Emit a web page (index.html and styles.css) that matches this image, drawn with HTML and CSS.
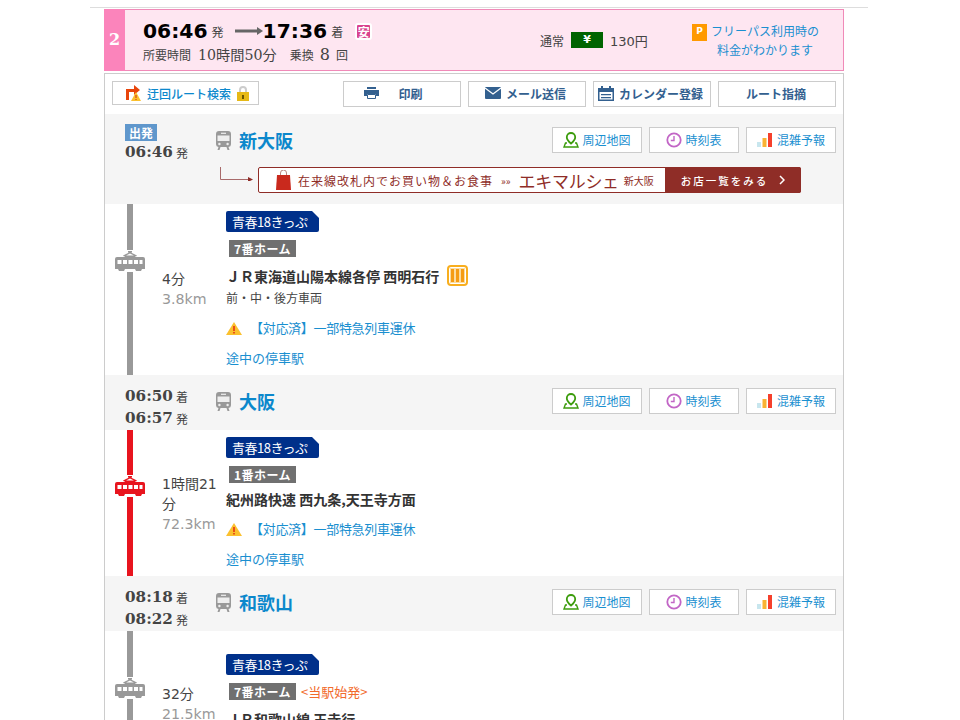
FILE: index.html
```html
<!DOCTYPE html>
<html lang="ja">
<head>
<meta charset="utf-8">
<title>ルート検索結果</title>
<link rel="stylesheet" href="styles.css">
</head>
<body>
<svg class="defs" width="0" height="0" aria-hidden="true">
  <symbol id="i-station" viewBox="0 0 15 19">
    <path d="M3 0h9a3 3 0 0 1 3 3v10a3 3 0 0 1-2.500 3H2.500A3 3 0 0 1 0 13V3a3 3 0 0 1 3-3z" fill="#999"/>
    <path d="M1.500 4.500h12v5.500h-12z" fill="#eee"/>
    <path d="M5 1.700h5v1.200H5z" fill="#eee"/>
    <circle cx="3.400" cy="13" r="1.200" fill="#eee"/>
    <circle cx="11.600" cy="13" r="1.200" fill="#eee"/>
    <path d="M2.500 16h2l-1 3h-2zM10.500 16h2l1 3h-2z" fill="#999"/>
  </symbol>
  <symbol id="i-train" viewBox="0 0 30 22">
    <path d="M13 1h4v1.500h-4zM15 2l7 3.500-1 1-6-3-6 3-1-1zM10 5.500h10v1.500H10z" fill="currentColor"/>
    <path d="M2 7h26a2 2 0 0 1 2 2v10H27l-1 2h-5l-1-2H10l-1 2H4l-1-2H0V9a2 2 0 0 1 2-2zM2.500 10v4h4v-4zM8 10v4h4v-4zM13.500 10v4h4v-4zM19 10v4h4v-4zM24.500 10v4h3v-4z" fill="currentColor" fill-rule="evenodd"/>
  </symbol>
  <symbol id="i-pin" viewBox="0 0 16 16">
    <path d="M8 1a4.200 4.200 0 0 1 4.200 4.200C12.200 8 8 11.500 8 11.500S3.800 8 3.800 5.200A4.200 4.200 0 0 1 8 1z" fill="none" stroke="#3c9c0c" stroke-width="1.800"/>
    <path d="M4 11H2.500L1 15h14l-1.500-4H12" fill="none" stroke="#3c9c0c" stroke-width="1.400"/>
  </symbol>
  <symbol id="i-clock" viewBox="0 0 16 16">
    <circle cx="8" cy="8" r="6.700" fill="none" stroke="#c266c6" stroke-width="1.800"/>
    <path d="M8 4v4.500H4.800" fill="none" stroke="#c266c6" stroke-width="1.400"/>
  </symbol>
  <symbol id="i-bars" viewBox="0 0 15 14">
    <rect x="0" y="9" width="4" height="5" fill="#c8e6ee"/>
    <rect x="5.500" y="5" width="4" height="9" fill="#f9b233"/>
    <rect x="11" y="0" width="4" height="14" fill="#f5402c"/>
  </symbol>
  <symbol id="i-warn" viewBox="0 0 16 13">
    <path d="M8 0l8 13H0z" fill="#fbc02d"/>
    <path d="M7.200 4h1.600v5H7.200zM7.200 10h1.600v1.500H7.200z" fill="#e53312"/>
  </symbol>
</svg>

<div class="page">
  <div class="summary">
    <div class="summary-no">2</div>
    <div class="summary-times">
      <div class="summary-line">
        <span class="big-time">06:46</span><span class="unit">発</span>
        <svg class="long-arrow" width="28" height="8" viewBox="0 0 28 8"><path d="M0 2.500h22V0l6 4-6 4V5.500H0z" fill="#666"/></svg>
        <span class="big-time">17:36</span><span class="unit">着</span>
        <span class="cheap">安</span>
      </div>
      <div class="summary-meta">
        <span>所要時間</span><span class="meta-val">10時間50分</span>
        <span class="meta-gap">乗換</span><span class="meta-num">8</span><span>回</span>
      </div>
    </div>
    <div class="fare">
      <span>通常</span><span class="yen">¥</span><span class="fare-val">130円</span>
    </div>
    <div class="freepass">
      <span class="p-icon">P</span>
      <a class="link">フリーパス利用時の<br>料金がわかります</a>
    </div>
  </div>

  <div class="result">
    <div class="toolbar">
      <a class="detour">
        <svg width="15" height="16" viewBox="0 0 15 16"><path d="M0 15V4h8V0l6 5-6 5V7H3v8z" fill="#e8450c"/><path d="M10 7l5 9H5z" fill="#fbc02d"/><path d="M9.500 10h1v3h-1zM9.500 14h1v1h-1z" fill="#c9291d"/></svg>
        <span>迂回ルート検索</span>
        <svg width="12" height="15" viewBox="0 0 12 15"><path d="M3 7V4a3 3 0 0 1 6 0v3" fill="none" stroke="#ccc" stroke-width="2"/><rect y="6" width="12" height="9" fill="#e6b917"/><rect x="5" y="9" width="2" height="4" fill="#6b5600"/></svg>
      </a>
      <div class="tool-right">
        <a class="tool tool-print">
          <svg width="15" height="12" viewBox="0 0 15 12"><path d="M3 0h9v2H3zM0 3h15v6h-3V7H3v2H0z" fill="#33608f"/><path d="M3.500 7.500h8v4h-8z" fill="none" stroke="#33608f"/></svg>
          <span>印刷</span>
        </a>
        <a class="tool">
          <svg width="16" height="12" viewBox="0 0 16 12"><rect width="16" height="12" rx="1" fill="#33608f"/><path d="M0 1l8 6 8-6" fill="none" stroke="#fff" stroke-width="1.300"/></svg>
          <span>メール送信</span>
        </a>
        <a class="tool">
          <svg width="16" height="15" viewBox="0 0 16 15"><path d="M0 2h3V0h2v2h6V0h2v2h3v13H0zM1.500 6v7.500h13V6z" fill="#33608f" fill-rule="evenodd"/><path d="M3 8h10v1.300H3zM3 11h10v1.300H3z" fill="#33608f"/></svg>
          <span>カレンダー登録</span>
        </a>
        <a class="tool"><span>ルート指摘</span></a>
      </div>
    </div>

    <section class="station station-first">
      <div class="station-head">
        <div class="station-time">
          <span class="depart-tag">出発</span>
          <div class="time-row"><span class="time">06:46</span><span class="unit">発</span></div>
        </div>
        <svg class="station-icon"><use href="#i-station"/></svg>
        <a class="station-name">新大阪</a>
        <div class="station-btns">
          <a class="sbtn"><svg class="si-16"><use href="#i-pin"/></svg>周辺地図</a>
          <a class="sbtn"><svg class="si-16"><use href="#i-clock"/></svg>時刻表</a>
          <a class="sbtn"><svg class="si-15"><use href="#i-bars"/></svg>混雑予報</a>
        </div>
      </div>
      <div class="banner-row">
        <svg class="banner-arrow" width="33" height="14" viewBox="0 0 33 14"><path d="M.500 0v12.500H28" fill="none" stroke="#a86a6a"/><path d="M28 10l5 2.500-5 2.500z" fill="#8f2d27"/></svg>
        <div class="banner">
          <div class="banner-left">
            <svg width="15" height="20" viewBox="0 0 15 20"><path d="M4.500 5V3a3 3 0 0 1 6 0v2" fill="none" stroke="#b9867f"/><path d="M1 5h13l1 15H0z" fill="#c9291d"/></svg>
            <span class="banner-text">在来線改札内でお買い物＆お食事</span>
            <span class="banner-chev">»»</span>
            <span class="banner-logo">エキマルシェ</span>
            <span class="banner-place">新大阪</span>
          </div>
          <div class="banner-cta">
            <span>お店一覧をみる</span>
            <svg width="6" height="10" viewBox="0 0 6 10"><path d="M1 1l4 4-4 4" fill="none" stroke="#fff" stroke-width="1.500"/></svg>
          </div>
        </div>
      </div>
    </section>

    <section class="segment seg-a">
      <div class="rail rail-gray"><svg class="train train-gray"><use href="#i-train"/></svg></div>
      <div class="seg-time"><div>4分</div><div class="dist">3.8km</div></div>
      <div class="seg-body">
        <span class="ticket">青春18きっぷ</span>
        <div class="home-row"><span class="home">7番ホーム</span></div>
        <div class="line-name">ＪＲ東海道山陽本線各停 西明石行
          <svg class="car-icon" width="21" height="21" viewBox="0 0 21 21"><rect x="1" y="1" width="19" height="19" rx="3" fill="#fff" stroke="#f8ae1e" stroke-width="2"/><path d="M3 3h15v15H3z" fill="#fcdca0"/><path d="M4 4h3v13H4zM9 4h3v13H9zM14 4h3v13h-3z" fill="#f59c12"/></svg>
        </div>
        <div class="cars">前・中・後方車両</div>
        <a class="alert"><svg class="warn"><use href="#i-warn"/></svg>【対応済】一部特急列車運休</a>
        <a class="stops">途中の停車駅</a>
      </div>
    </section>

    <section class="station">
      <div class="station-head">
        <div class="station-time">
          <div class="time-row"><span class="time">06:50</span><span class="unit">着</span></div>
          <div class="time-row"><span class="time">06:57</span><span class="unit">発</span></div>
        </div>
        <svg class="station-icon"><use href="#i-station"/></svg>
        <a class="station-name">大阪</a>
        <div class="station-btns">
          <a class="sbtn"><svg class="si-16"><use href="#i-pin"/></svg>周辺地図</a>
          <a class="sbtn"><svg class="si-16"><use href="#i-clock"/></svg>時刻表</a>
          <a class="sbtn"><svg class="si-15"><use href="#i-bars"/></svg>混雑予報</a>
        </div>
      </div>
    </section>

    <section class="segment seg-b">
      <div class="rail rail-red"><svg class="train train-red"><use href="#i-train"/></svg></div>
      <div class="seg-time"><div>1時間21分</div><div class="dist">72.3km</div></div>
      <div class="seg-body">
        <span class="ticket">青春18きっぷ</span>
        <div class="home-row"><span class="home">1番ホーム</span></div>
        <div class="line-name line-compact">紀州路快速 西九条,天王寺方面</div>
        <a class="alert alert-tight"><svg class="warn"><use href="#i-warn"/></svg>【対応済】一部特急列車運休</a>
        <a class="stops">途中の停車駅</a>
      </div>
    </section>

    <section class="station">
      <div class="station-head">
        <div class="station-time">
          <div class="time-row"><span class="time">08:18</span><span class="unit">着</span></div>
          <div class="time-row"><span class="time">08:22</span><span class="unit">発</span></div>
        </div>
        <svg class="station-icon"><use href="#i-station"/></svg>
        <a class="station-name">和歌山</a>
        <div class="station-btns">
          <a class="sbtn"><svg class="si-16"><use href="#i-pin"/></svg>周辺地図</a>
          <a class="sbtn"><svg class="si-16"><use href="#i-clock"/></svg>時刻表</a>
          <a class="sbtn"><svg class="si-15"><use href="#i-bars"/></svg>混雑予報</a>
        </div>
      </div>
    </section>

    <section class="segment seg-c">
      <div class="rail rail-gray"><svg class="train train-gray"><use href="#i-train"/></svg></div>
      <div class="seg-time"><div>32分</div><div class="dist">21.5km</div></div>
      <div class="seg-body">
        <span class="ticket">青春18きっぷ</span>
        <div class="home-row"><span class="home">7番ホーム</span><span class="origin">&lt;当駅始発&gt;</span></div>
        <div class="line-name">ＪＲ和歌山線 王寺行</div>
      </div>
    </section>
  </div>
</div>
</body>
</html>
```

FILE: styles.css
```css
* { box-sizing: border-box; }
html, body { margin: 0; padding: 0; height: 720px; overflow: hidden; background: #fff; }
body { font-family: "Noto Sans CJK JP", "DejaVu Sans", sans-serif; font-size: 13px; color: #333; }
a { color: #0b88cc; text-decoration: none; }
.defs { position: absolute; }

.page { width: 778px; margin-left: 90px; padding: 9px 14px 0; background: linear-gradient(#ddd, #ddd) 0 7px / 100% 1px no-repeat; }

.summary { display: flex; width: 740px; height: 62px; border: 1px solid #f08ab8; background: #fee6f1; }
.summary-no { width: 21px; height: 62px; margin: -1px 0 -1px -1px; background: #fb84bb; color: #fff; font: bold 16px/62px "DejaVu Serif", serif; text-align: center; }
.summary-times { padding: 9px 0 0 18px; width: 415px; }
.summary-line { display: flex; align-items: center; height: 24px; color: #000; }
.big-time { font: bold 20.300px/24px "DejaVu Sans", sans-serif; color: #000; }
.summary-line .unit { font-size: 12px; margin-left: 4px; color: #444; }
.long-arrow { margin-left: 11px; }
.cheap { width: 17px; height: 17px; margin-left: 12px; background: #d9438f; color: #fff; font-size: 12px; font-weight: 700; line-height: 13px; text-align: center; border: 2px solid #fff; border-radius: 3px; display: block; }
.summary-meta { display: flex; align-items: baseline; margin-top: 2px; font-size: 12px; line-height: 20px; color: #444; }
.meta-val { font: 14.200px/20px "DejaVu Serif", "Noto Sans CJK JP", serif; margin-left: 7px; }
.meta-gap { margin-left: 13px; }
.meta-num { font: 16px/20px "DejaVu Serif", serif; margin: 0 6px; }
.fare { display: flex; align-items: center; width: 152px; height: 60px; font-size: 12px; color: #444; }
.yen { width: 32px; height: 16px; margin: 0 7px; background: #006400; color: #fff; font: bold 11px/16px "DejaVu Sans", sans-serif; text-align: center; }
.fare-val { font-family: "DejaVu Sans", "Noto Sans CJK JP", sans-serif; font-size: 13px; }
.freepass { display: flex; align-items: flex-start; padding-top: 11px; }
.p-icon { width: 15px; height: 17px; margin-top: 3px; margin-right: 4px; background: #f90; color: #fff; font: bold 9px/15px "DejaVu Sans", sans-serif; text-align: center; }
.freepass .link { font-size: 12px; line-height: 19px; text-align: center; color: #1a8fd0; }

.result { width: 740px; height: 660px; margin-top: 2px; border: 1px solid #ccc; border-bottom: 0; }
.toolbar { display: flex; justify-content: space-between; height: 40px; padding: 7px 7px 0; background: #fff; }
.detour { display: flex; align-items: center; gap: 6px; width: 147px; height: 24px; padding-left: 13px; border: 1px solid #ccc; font-size: 12px; font-weight: 500; }
.tool-right { display: flex; gap: 7px; }
.tool { display: flex; align-items: center; justify-content: center; gap: 5px; width: 118px; height: 26px; padding: 0 3px 2px 0; border: 1px solid #ccc; color: #33608f; font-size: 12px; font-weight: 700; }
.tool:last-child { padding-right: 2px; }
.tool-print { gap: 19px; padding-right: 17px; }

.station { background: #f5f5f5; height: 55px; }
.station-first { height: 90px; }
.station-head { display: flex; align-items: center; height: 52px; padding-right: 7px; }
.station-time { align-self: flex-start; width: 111px; padding: 10px 0 0 20px; }
.time-row { display: flex; align-items: center; height: 22px; }
.time { font: bold 15.200px/22px "DejaVu Serif", serif; color: #444; }
.station-time .unit { font-size: 12px; margin-left: 3px; color: #444; }
.depart-tag { display: block; width: 32px; height: 17px; background: #5f97cc; color: #fff; font-size: 12px; font-weight: 700; line-height: 17px; text-align: center; }
.station-icon { width: 15px; height: 19px; flex: none; }
.station-name { margin-left: 8px; font-size: 18px; font-weight: 700; color: #0b88cc; line-height: 26px; }
.station-btns { display: flex; gap: 7px; margin-left: auto; }
.sbtn { display: flex; align-items: center; justify-content: center; gap: 3px; width: 90px; height: 26px; padding-bottom: 2px; background: #fff; border: 1px solid #ccc; color: #1a8fd0; font-size: 12px; }
.si-16 { width: 16px; height: 16px; margin-top: 2px; }
.si-15 { width: 15px; height: 14px; margin: 2px 2px 0 0; }

.banner-row { display: flex; align-items: flex-start; margin-top: 1px; padding-left: 115px; }
.banner-arrow { margin-right: 5px; }
.banner { display: flex; width: 543px; height: 26px; border: 1px solid #8f2d27; border-radius: 2px; background: #fff; }
.banner-left { flex: 1; display: flex; align-items: center; padding-left: 17px; color: #8f2d27; font-size: 11px; white-space: nowrap; }
.banner-text { margin-left: 7px; font-size: 12px; letter-spacing: 1px; }
.banner-chev { margin-left: 8px; font-size: 10px; }
.banner-logo { margin-left: 8px; font-size: 17px; letter-spacing: -.3px; }
.banner-place { margin-left: 5px; font-size: 10px; }
.banner-cta { width: 136px; margin: -1px -1px -1px 0; background: #8f2d27; color: #fff; display: flex; align-items: center; justify-content: center; gap: 11px; font-size: 10.500px; font-weight: 500; letter-spacing: 2px; border-radius: 0 2px 2px 0; }

.segment { display: flex; background: #fff; }
.seg-a { height: 171px; }
.seg-b { height: 146px; }
.seg-c { height: 146px; }
.rail { width: 57px; position: relative; flex: none; }
.rail::before { content: ""; position: absolute; left: 22px; top: 0; bottom: 0; width: 6px; }
.rail-gray::before { background: #999; }
.rail-red::before { background: #e8141e; }
.train { position: absolute; left: 10px; top: 46px; width: 30px; height: 22px; background: #fff; }
.train-gray { color: #999; }
.train-red { color: #e8141e; top: 45px; }
.seg-time { width: 64px; padding-right: 5px; display: flex; flex-direction: column; justify-content: center; font: 14px/20px "DejaVu Sans", "Noto Sans CJK JP", sans-serif; color: #444; flex: none; }
.seg-a .seg-time { margin-top: -2px; }
.seg-b .seg-time { margin-top: 2px; }
.dist { color: #999; font-size: 14.200px; white-space: nowrap; }
.seg-body { padding-top: 7px; flex: 1; }
.seg-c .seg-body { padding-top: 23px; }
.ticket { display: block; width: 93px; height: 21px; background: #00308a; color: #fff; font-size: 13px; letter-spacing: -.5px; line-height: 21px; padding-left: 6px; border-radius: 2px; clip-path: polygon(0 0, 86px 0, 100% 7px, 100% 100%, 0 100%); }
.home-row { display: flex; align-items: center; height: 17px; margin: 8px 0 0 3px; }
.home { width: 67px; height: 17px; background: #707070; color: #fff; font-size: 12px; font-weight: 700; letter-spacing: .5px; line-height: 17px; text-align: center; }
.origin { margin-left: 5px; color: #f26b2d; font-size: 13px; }
.line-name { display: flex; align-items: center; gap: 8px; height: 21px; margin-top: 8px; font-size: 14px; font-weight: 700; color: #333; white-space: nowrap; }
.line-compact { margin-top: 5px; }
.cars { font-size: 12px; line-height: 18px; margin-top: 3px; color: #444; }
.alert { display: flex; align-items: center; gap: 8px; font-size: 13px; letter-spacing: -.3px; line-height: 20px; margin-top: 11px; color: #1a8fd0; }
.alert-tight { margin-top: 10px; }
.warn { width: 16px; height: 13px; flex: none; }
.stops { display: block; font-size: 13px; line-height: 20px; margin-top: 10px; color: #1a8fd0; }
```
